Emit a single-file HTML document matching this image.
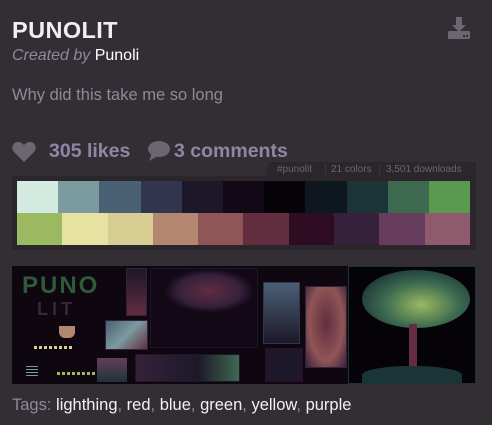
<!DOCTYPE html>
<html><head><meta charset="utf-8"><style>
*{margin:0;padding:0;box-sizing:border-box}
body{width:492px;height:425px;background:#332e34;font-family:"Liberation Sans","DejaVu Sans",sans-serif;position:relative;overflow:hidden}
.a{position:absolute}
h1{position:absolute;left:12px;top:17px;font-size:23.5px;font-weight:bold;color:#f0eef2;letter-spacing:0.4px}
.by{left:12px;top:47px;font-size:16px;color:#fff}
.by i{color:#8d8a9a}
.desc{left:12px;top:86px;font-size:16.5px;color:#8d8a9a}
.stat{top:140px;font-size:19.5px;font-weight:bold;color:#8c88a6}
.tab{left:265px;top:162px;width:211px;height:15px;background:#2a262c;font-size:10px;color:#6a6670;line-height:15px;clip-path:polygon(4px 0,100% 0,100% 100%,0 100%)}
.pal{left:12px;top:176px;width:464px;height:74px;background:#2a262c}
.row{position:absolute;left:5px;width:453px;height:32px;display:flex}
.row div{flex:1}
.img{left:12px;top:266px;width:464px;height:118px;background:#0e070f;overflow:hidden}
.tags{left:12px;top:396px;font-size:16.5px;color:#8d8a9a}
.tags span{color:#f2f0f4}
</style></head><body>
<h1>PUNOLIT</h1>
<svg class="a" style="left:447px;top:17px" width="24" height="22" viewBox="0 0 24 22"><path d="M9 0h6v8h4l-7 7-7-7h4z" fill="#6b6670"/><rect x="1" y="14" width="22" height="8" rx="1" fill="#6b6670"/><rect x="16" y="18" width="2" height="2" fill="#332e34"/><rect x="19" y="18" width="2" height="2" fill="#332e34"/></svg>
<div class="a by"><i>Created by</i> Punoli</div>
<div class="a desc">Why did this take me so long</div>
<svg class="a" style="left:12px;top:141px" width="24" height="21" viewBox="0 0 24 21"><path d="M12 21L2 11C-1 8 0 2 5 1c3-.5 5 1 7 3 2-2 4-3.5 7-3 5 1 6 7 3 10z" fill="#6b6670"/></svg>
<div class="a stat" style="left:49px">305 likes</div>
<svg class="a" style="left:146px;top:141px" width="24" height="20" viewBox="0 0 24 20"><ellipse cx="13" cy="8" rx="11" ry="8" fill="#6b6670"/><path d="M3 20l3-8 6 3z" fill="#6b6670"/></svg>
<div class="a stat" style="left:174px">3 comments</div>
<div class="a tab"><span style="position:absolute;left:12px">#punolit</span><span style="position:absolute;left:60px;top:2px;height:11px;border-left:1px solid #3c373f"></span><span style="position:absolute;left:66px">21 colors</span><span style="position:absolute;left:114px;top:2px;height:11px;border-left:1px solid #3c373f"></span><span style="position:absolute;left:121px">3,501 downloads</span></div>
<div class="a pal">
<div class="row" style="top:5px"><div style="background:#d2eae0"></div><div style="background:#7b9ba0"></div><div style="background:#4a6075"></div><div style="background:#313550"></div><div style="background:#1c1829"></div><div style="background:#130816"></div><div style="background:#050307"></div><div style="background:#0d171d"></div><div style="background:#1b3536"></div><div style="background:#3d6a50"></div><div style="background:#5a9a50"></div></div>
<div class="row" style="top:37px"><div style="background:#9ab961"></div><div style="background:#e6e2a2"></div><div style="background:#d8cd93"></div><div style="background:#b3876f"></div><div style="background:#905556"></div><div style="background:#612d3f"></div><div style="background:#2e0d22"></div><div style="background:#36213c"></div><div style="background:#663d5c"></div><div style="background:#8e5a6c"></div></div>
</div>
<div class="a img">
<div class="a" style="left:10px;top:6px;font:bold 24px 'Liberation Sans';color:#2f5a3c;letter-spacing:2px">PUNO</div>
<div class="a" style="left:25px;top:33px;font:bold 18px 'Liberation Sans';color:#3a2735;letter-spacing:4px">LIT</div>
<div class="a" style="left:47px;top:60px;width:16px;height:12px;background:#b3876f;border-radius:0 0 6px 6px"></div>
<div class="a" style="left:22px;top:80px;width:40px;height:3px;background:repeating-linear-gradient(90deg,#d8cd93 0 3px,transparent 3px 5px)"></div>
<div class="a" style="left:45px;top:106px;width:45px;height:3px;background:repeating-linear-gradient(90deg,#9ab961 0 3px,transparent 3px 5px)"></div>
<div class="a" style="left:14px;top:100px;width:12px;height:10px;background:repeating-linear-gradient(0deg,#7b9ba0 0 1px,transparent 1px 3px)"></div>
<div class="a" style="left:114px;top:2px;width:21px;height:48px;background:linear-gradient(#1c1829,#612d3f);border:1px solid #36213c"></div>
<div class="a" style="left:93px;top:54px;width:43px;height:30px;background:linear-gradient(135deg,#4a6075,#7b9ba0 50%,#612d3f);border:1px solid #36213c"></div>
<div class="a" style="left:138px;top:2px;width:108px;height:80px;background:radial-gradient(ellipse 45px 22px at 55% 28%,#612d3f,#36213c 70%,#130816);border:1px solid #1c1829"></div>
<div class="a" style="left:123px;top:88px;width:105px;height:28px;background:linear-gradient(90deg,#36213c,#1c1829 60%,#3d6a50);border:1px solid #1c1829"></div>
<div class="a" style="left:85px;top:92px;width:30px;height:24px;background:linear-gradient(#663d5c,#1b3536)"></div>
<div class="a" style="left:251px;top:16px;width:37px;height:62px;background:linear-gradient(#4a6075,#1c1829);border:1px solid #313550"></div>
<div class="a" style="left:293px;top:20px;width:42px;height:82px;background:radial-gradient(ellipse at 50% 45%,#612d3f,#905556 60%,#36213c);border:1px solid #36213c"></div>
<div class="a" style="left:253px;top:82px;width:38px;height:34px;background:#1c1829;border:1px solid #2e0d22"></div>
<div class="a" style="left:336px;top:0;width:128px;height:118px;background:#050307;border:1px solid #1b3536"></div>
<div class="a" style="left:350px;top:4px;width:108px;height:58px;border-radius:50%;background:radial-gradient(ellipse at 55% 60%,#9ab961,#3d6a50 45%,#1b3536 80%,transparent 100%)"></div>
<div class="a" style="left:397px;top:58px;width:8px;height:45px;background:#612d3f"></div>
<div class="a" style="left:350px;top:100px;width:100px;height:18px;border-radius:50% 50% 0 0;background:#1b3536"></div>
</div>
<div class="a tags">Tags: <span>lighthing</span>, <span>red</span>, <span>blue</span>, <span>green</span>, <span>yellow</span>, <span>purple</span></div>
</body></html>
